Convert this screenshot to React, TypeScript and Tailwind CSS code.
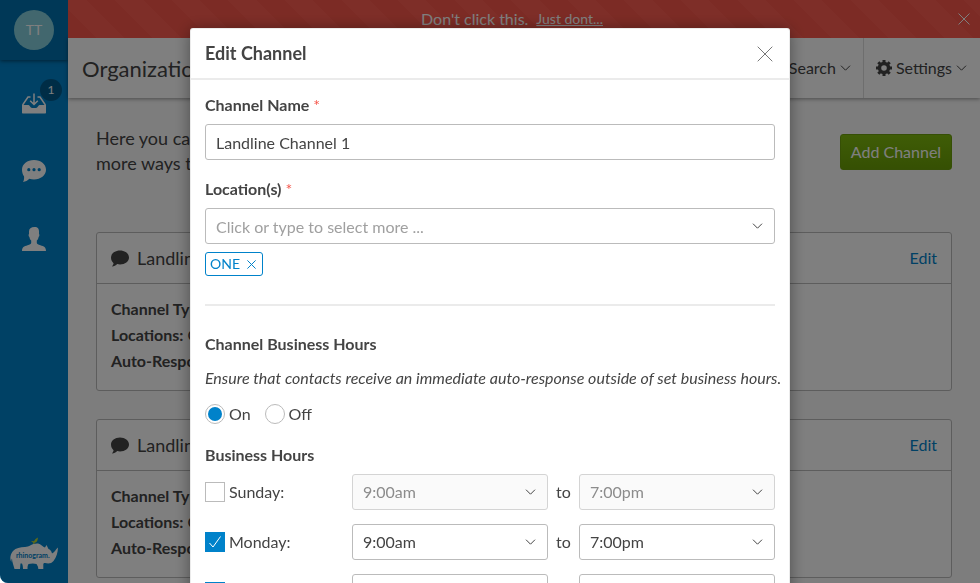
import React, { useState } from "react";

const CHEVRON = "pointer-events-none absolute right-3 top-1/2 -translate-y-1/2 text-[#444]";

function Chevron({ className = "" }: { className?: string }) {
  return (
    <svg className={className} width="11" height="6" viewBox="0 0 11 6" fill="none" stroke="currentColor" aria-hidden="true">
      <path d="M1 .7 5.5 5.2 10 .7" />
    </svg>
  );
}

function Cross({ size, className = "" }: { size: number; className?: string }) {
  return (
    <svg className={className} width={size} height={size} viewBox="0 0 16 16" fill="none" stroke="currentColor" aria-hidden="true">
      <path vectorEffect="non-scaling-stroke" d="m.7.7 14.6 14.6M15.3.7.7 15.3" />
    </svg>
  );
}

function Bubble({ className = "" }: { className?: string }) {
  return (
    <svg className={className} width="18" height="17" viewBox="0 0 18 17" fill="currentColor" aria-hidden="true">
      <path d="M9 .5c5 0 9 3 9 7s-4 7-9 7c-1 0-1.900-.1-2.800-.4C4.800 15.500 3.200 16.300.9 16.500c.9-.9 1.500-2 1.700-3.300C1 11.900 0 9.900 0 7.500c0-4 4-7 9-7Z" />
    </svg>
  );
}

function Rhino() {
  return (
    <svg width="50" height="34" viewBox="0 0 50 34" role="img" aria-label="rhinogram">
      <path fill="#c0d72f" d="m22 4 3 .3c1-1.800 2-2.800 4-3.800l-.5 2.500c-.3 1.600-1.500 2.600-3 2.800L25 9h-1l.3-3.200L22 4Z" />
      <path
        fill="#fff"
        d="M4 14c3-3 7-4 12-4 4 0 7-3.500 12-3.500 3.500 0 4.500 2.500 8 4l1.500-2.500 2 4c1.500.8 3 1.500 3.500 4.500 3-1.500 3.500-4 6-6-.2 5-1.500 9.500-4.500 13.500-2 2.500-5 3-8.500 2-1.500 0-1.700.5-1.700 2V32h-5c0-2-.8-3.500-1.800-5-2.500-.8-5.500-.6-8 0-1 1.500-1 3-1 5h-4.500c0-2-.3-4-1-5.500h-1.500L11 32H5.500C4.500 28 3 25 3 21.500c-.6 1-.7 2-.7 3.500C.5 21 1.500 17 4 14Z"
      />
      <text x="7" y="21" fontSize="7" fontWeight="700" fill="#0082ca" fontFamily="Lato, sans-serif">rhinogram.</text>
    </svg>
  );
}

function Sidebar() {
  return (
    <aside className="flex w-[68px] shrink-0 flex-col items-center bg-[#0082ca] text-white">
      <div className="flex h-[60px] w-full items-center justify-center bg-[#0070ae] shadow-[0_1px_4px_rgba(0,0,0,0.5)]">
        <button className="h-10 w-10 rounded-full bg-[#85cfdc] text-sm">TT</button>
      </div>
      <nav className="flex flex-col items-center gap-11 pt-[31px]">
        <a href="#inbox" aria-label="Inbox, 1 new" className="relative flex h-6 items-center">
          <svg width="24" height="22" viewBox="0 0 24 22" fill="none" stroke="currentColor" aria-hidden="true">
            <path fill="currentColor" stroke="none" d="M0 13h6.500c1.200 0 1.800 3 3.500 3h4c1.700 0 2.300-3 3.500-3H24v7.500c0 .6-.4 1-1 1H1c-.6 0-1-.4-1-1V13Z" />
            <path strokeWidth="1.500" d="M8.500 5H6L.9 12.500V15M15.500 5H18l5.100 7.500V15M12 1.500V12M8.200 8.700 12 12.500l3.800-3.800" />
          </svg>
          <span className="absolute -right-4 -top-3 flex h-[22px] w-[22px] items-center justify-center rounded-full bg-[#005b8d] text-xs">1</span>
        </a>
        <a href="#messages" aria-label="Messages" className="flex h-6 items-center">
          <svg width="24" height="22" viewBox="0 0 24 22" aria-hidden="true">
            <path fill="currentColor" d="M12 0c6.700 0 12 4.200 12 9.700s-5.300 9.700-12 9.700c-1.700 0-3.300-.3-4.700-.7C5.500 20.500 3.500 21.600 1 22c1-1.500 1.300-3.500 1-5.700-1.300-1.700-2-4.100-2-6.600C0 4.200 5.300 0 12 0Z" />
            <g fill="#0082ca"><circle cx="6.800" cy="9.700" r="1.600" /><circle cx="12" cy="9.700" r="1.600" /><circle cx="17.200" cy="9.700" r="1.600" /></g>
          </svg>
        </a>
        <a href="#contacts" aria-label="Contacts" className="flex h-6 items-center">
          <svg width="24" height="24" viewBox="0 0 24 24" fill="currentColor" aria-hidden="true">
            <path d="M7 4.500C7 1.500 9 0 12.500 0S17 2 17 4.500V7c.6.4.6 2-.4 3-.3 1.700-1 2.800-1.800 3.600V16c.3 1 1.400 1.600 3.600 2.200 3.600 1 5.600 2 5.600 5.800H0c0-3.800 2-4.800 5.600-5.800 2.200-.6 3.300-1.200 3.600-2.200v-2.400C8.400 12.800 7.700 11.700 7.400 10c-1-1-1-2.600-.4-3V4.500Z" />
          </svg>
        </a>
      </nav>
      <div className="mt-auto pb-3"><Rhino /></div>
    </aside>
  );
}

function ChannelCard({ name }: { name: string }) {
  return (
    <section className="rounded-[3px] border border-[#bbb] bg-white">
      <header className="flex h-[51px] items-center border-b border-[#bbb] px-3.5">
        <Bubble />
        <h2 className="ml-2 grow text-lg">{name}</h2>
        <a href="#edit" className="text-[#0082ca]">Edit</a>
      </header>
      <div className="px-3.5 pb-4 pt-3 leading-[26px]">
        <p><b>Channel Type:</b> Landline</p>
        <p><b>Locations:</b> ONE</p>
        <p><b>Auto-Response:</b> On</p>
      </div>
    </section>
  );
}

function TimeSelect({ label, value, disabled }: { label: string; value: string; disabled: boolean }) {
  return (
    <div className="relative min-w-0 flex-1">
      <select
        aria-label={label}
        disabled={disabled}
        defaultValue={value}
        className="block h-9 w-full appearance-none rounded-[3px] border border-[#bbb] bg-white px-2.5 text-[#444] opacity-100 disabled:border-[#d4d4d4] disabled:bg-[#fafafa] disabled:text-[#8c8c8c]"
      >
        <option>{value}</option>
      </select>
      <Chevron className={CHEVRON} />
    </div>
  );
}

function DayRow({ day, initial }: { day: string; initial: boolean }) {
  const [open, setOpen] = useState(initial);
  return (
    <div className="flex items-center">
      <label className="flex w-[147px] items-center gap-1">
        <span className="relative h-5 w-5">
          <input
            type="checkbox"
            checked={open}
            onChange={() => setOpen(!open)}
            className="peer block h-5 w-5 appearance-none border border-[#bbb] bg-white checked:border-[#0082ca] checked:bg-[#0082ca]"
          />
          <svg className="pointer-events-none absolute inset-0 hidden peer-checked:block" width="20" height="20" viewBox="0 0 20 20" fill="none" stroke="#fff" aria-hidden="true">
            <path d="m4.500 11 3.500 4L15.500 4.500" />
          </svg>
        </span>
        {day}:
      </label>
      <TimeSelect label={`${day} opening time`} value="9:00am" disabled={!open} />
      <span className="w-[31px] text-center">to</span>
      <TimeSelect label={`${day} closing time`} value="7:00pm" disabled={!open} />
    </div>
  );
}

function EditChannel() {
  const [hours, setHours] = useState("On");
  return (
    <div role="dialog" aria-modal="true" aria-labelledby="dialog-title" className="w-full max-w-[600px] self-start rounded-[3px] bg-white shadow-[0_0_0_1px_rgba(0,0,0,0.08)_inset,0_2px_16px_rgba(0,0,0,0.4)]">
      <header className="flex h-[52px] items-center justify-between border-b-2 border-[#ebebeb] pl-[15px] pr-[17px]">
        <h2 id="dialog-title" className="text-lg font-bold">Edit Channel</h2>
        <button aria-label="Close" className="pt-0.5 text-[#777]"><Cross size={16} /></button>
      </header>
      <form className="p-[15px] leading-5">
        <label htmlFor="name" className="mb-[9px] block font-bold">Channel Name <span className="font-normal text-[#f5554a]">*</span></label>
        <input id="name" defaultValue="Landline Channel 1" className="block h-9 w-full rounded-[3px] border border-[#bbb] px-2.5" />
        <label htmlFor="locations" className="mb-[9px] mt-[19px] block font-bold">Location(s) <span className="font-normal text-[#f5554a]">*</span></label>
        <div className="relative">
          <input id="locations" placeholder="Click or type to select more ..." className="block h-9 w-full rounded-[3px] border border-[#bbb] px-2.5 placeholder:text-[#a0a0a0]" />
          <Chevron className={CHEVRON} />
        </div>
        <button type="button" aria-label="Remove ONE" className="mt-2 flex h-6 items-center gap-[7px] rounded-[3px] border border-[#0082ca] pl-1 pr-1.5 text-sm text-[#0082ca]">
          ONE <Cross size={9} />
        </button>
        <hr className="my-7 border-t-2 border-[#ebebeb]" />
        <h3 className="font-bold">Channel Business Hours</h3>
        <p className="mt-3.5 whitespace-nowrap italic">Ensure that contacts receive an immediate auto-response outside of set business hours.</p>
        <div className="mt-4 flex gap-3.5">
          {["On", "Off"].map((v) => (
            <label key={v} className="flex items-center gap-1">
              <input
                type="radio"
                name="hours"
                checked={hours === v}
                onChange={() => setHours(v)}
                className="h-5 w-5 appearance-none rounded-full border border-[#bbb] bg-white bg-clip-content p-0.5 checked:bg-[#0082ca]"
              />
              {v}
            </label>
          ))}
        </div>
        <h3 className="mb-[9px] mt-[21px] font-bold">Business Hours</h3>
        <div className="flex flex-col gap-3.5">
          <DayRow day="Sunday" initial={false} />
          <DayRow day="Monday" initial />
          <DayRow day="Tuesday" initial />
        </div>
      </form>
    </div>
  );
}

export default function App() {
  return (
    <div className="h-screen overflow-hidden bg-white font-[Lato,sans-serif] text-base text-[#444]">
      <div className="flex h-full overflow-hidden rounded-bl-lg bg-[#fafafa]">
        <Sidebar />
        <div className="flex min-w-0 grow flex-col">
          <div className="relative flex h-[38px] shrink-0 items-center justify-center gap-2 bg-[repeating-linear-gradient(45deg,#f8574a_0px,#f8574a_20px,#fd5c50_20px,#fd5c50_40px)] pr-6 text-white">
            <span>Don't click this.</span>
            <a href="#dont" className="text-sm underline">Just dont...</a>
            <button aria-label="Dismiss" className="absolute right-2.5 top-[13px]"><Cross size={12} /></button>
          </div>
          <header className="flex h-[60px] shrink-0 items-center bg-white pl-3.5 shadow-[0_1px_4px_rgba(0,0,0,0.4)]">
            <h1 className="grow text-[22px]">Organization Channels</h1>
            <button className="flex h-full items-center gap-1 border-r border-[#ddd] px-3">Search <Chevron /></button>
            <button className="flex h-full items-center gap-1 pl-3 pr-[13px]">
              <svg width="16" height="16" viewBox="0 0 16 16" fill="none" stroke="currentColor" aria-hidden="true">
                <circle cx="8" cy="8" r="4.500" strokeWidth="3.400" />
                <path strokeWidth="3" d="M8 0v3M8 13v3M0 8h3M13 8h3M2.300 2.300l2 2M11.700 11.700l2 2M2.300 13.700l2-2M11.700 4.300l2-2" />
              </svg>
              Settings <Chevron />
            </button>
          </header>
          <main className="p-7">
            <div className="mb-14 flex items-start justify-between">
              <p className="text-lg leading-[25px]">Here you can create and manage your channels, giving contacts<br />more ways to reach your organization.</p>
              <button className="mt-2 h-9 w-28 shrink-0 rounded-[3px] border border-[#6c9f0c] bg-linear-to-b from-[#7fba0e] to-[#6ba006] text-white">Add Channel</button>
            </div>
            <div className="flex flex-col gap-7">
              <ChannelCard name="Landline Channel 1" />
              <ChannelCard name="Landline Channel 2" />
            </div>
          </main>
        </div>
      </div>
      <div className="fixed inset-0 flex justify-center overflow-hidden rounded-bl-lg bg-black/50 pt-7">
        <EditChannel />
      </div>
    </div>
  );
}
